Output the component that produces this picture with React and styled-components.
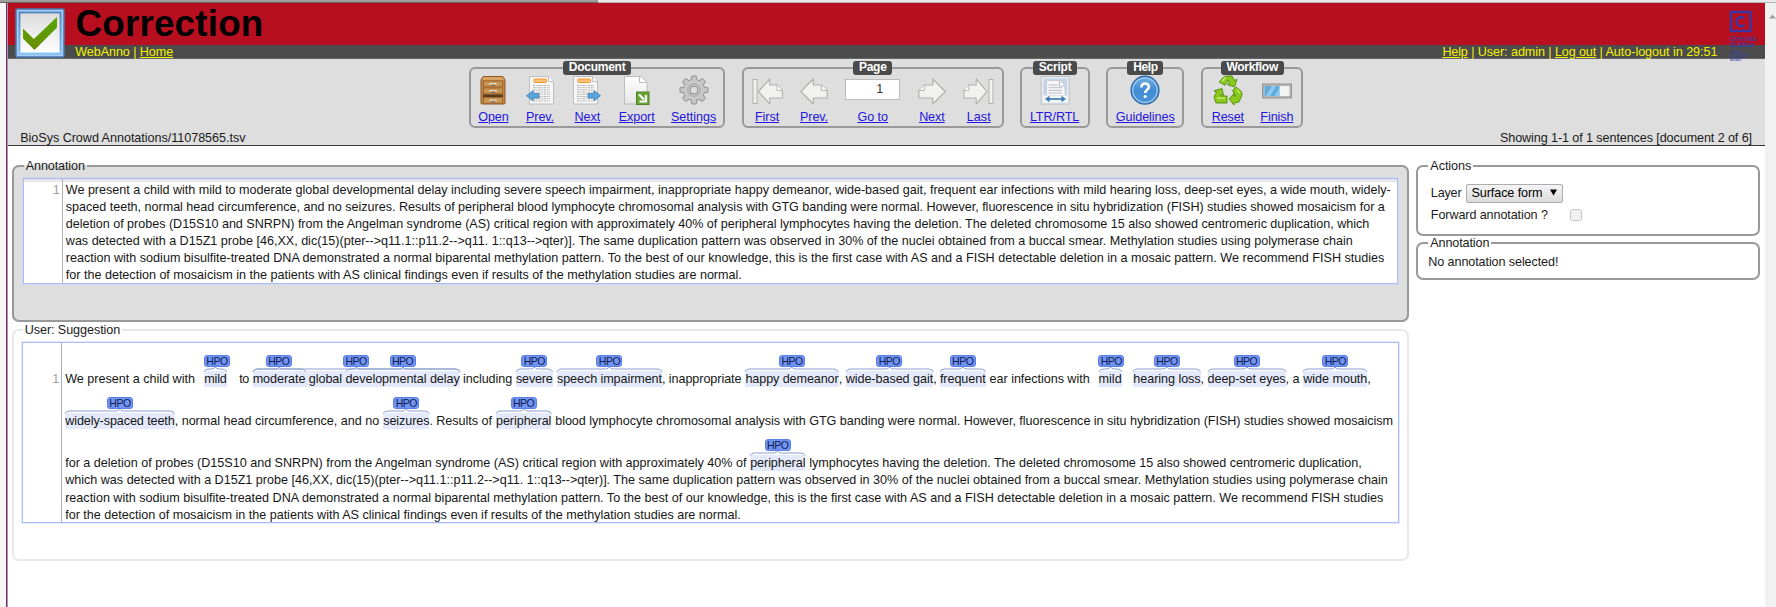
import React, { useLayoutEffect, useRef } from "react";
import styled, { createGlobalStyle } from "styled-components";

const Global = createGlobalStyle`
  * { box-sizing: border-box; }
  body { margin: 0; background: #fff; overflow: hidden; }
  fieldset { min-width: 0; margin: 0; padding: 0; }
`;

const Page = styled.div`
  width: 1776px;
  height: 607px;
  overflow: hidden;
  display: flex;
  flex-direction: column;
  font: 12.6px/14px "Liberation Sans", Arial, sans-serif;
  color: #1a1a1a;
`;
const TopStrip = styled.div`
  height: 3px;
  flex: none;
  display: flex;
  background: #e8e8e8;
  border-bottom: 1px solid #b4b4b4;
`;
const TopShade = styled.div`
  width: 598px;
  height: 3px;
  background: #a09e9c;
  border-bottom: 1px solid #66625f;
`;
const Frame = styled.div`
  flex: 1;
  min-height: 0;
  display: flex;
`;
const LeftEdge = styled.div`
  width: 8px;
  background: #f8f8f8;
  border-right: 1px solid #b98fb4;
  box-shadow: inset -1px 0 0 #5e3359;
`;
const Main = styled.div`
  position: relative;
  width: 1757px;
`;
const ScrollTrack = styled.div`
  flex: 1;
  background: #f1f1f1;
  padding: 5px 0 0 4px;
`;

const Banner = styled.div`
  height: 41.5px;
  background: #b70f20;
  padding: 1.5px 0 0 67.5px;
  color: #000;
  font-size: 36.8px;
  line-height: 37px;
  font-weight: bold;
`;
const NavBar = styled.div`
  height: 14.5px;
  background: #4c4c4c;
  border-bottom: 1px solid #666;
  color: #f2f200;
  display: flex;
  justify-content: space-between;
  padding: 0 47.5px 0 67.3px;
`;
const LogoSlot = styled.div`
  position: absolute;
  left: 7px;
  top: 4px;
  width: 51px;
  height: 54px;
`;
const InstituteSlot = styled.div`
  position: absolute;
  left: 1721px;
  top: 7px;
  width: 30px;
  height: 52px;
  opacity: 0.9;
`;

const Header = styled.div`
  height: 87px;
  background: #dedede;
  border-bottom: 1.5px solid #3c3540;
  display: flex;
  flex-direction: column;
  justify-content: space-between;
`;
const Toolbar = styled.div`
  display: flex;
  gap: 16.6px;
  padding: 2px 0 0 461px;
`;
const Group = styled.fieldset`
  width: ${(p) => p.$w}px;
  height: 67px;
  border: 2px solid #999;
  border-radius: 6px;
  display: block;
`;
const GroupTitle = styled.legend`
  width: ${(p) => p.$w}px;
  height: 14px;
  margin: 0 auto;
  padding: 0;
  background: #4a4a4a;
  border-radius: 3px;
  color: #fff;
  font-weight: bold;
  font-size: 12px;
  line-height: 13.5px;
  text-align: center;
`;
const Items = styled.div`
  display: flex;
  justify-content: space-between;
  padding: 0 ${(p) => p.$r}px 0 ${(p) => p.$l}px;
  height: 50px;
`;
const Item = styled.a`
  width: ${(p) => p.$w}px;
  display: flex;
  flex-direction: column;
  align-items: center;
  color: #2414e0;
  svg { flex: none; margin-bottom: 4.5px; overflow: visible; }
`;
const PageInput = styled.div`
  width: 55px;
  height: 20.5px;
  margin: 4px 0 10px;
  flex: none;
  border: 1px solid #bbb;
  background: #fff;
  color: #333;
  padding-right: 16px;
  text-align: right;
  line-height: 19px;
`;
const Status = styled.div`
  display: flex;
  justify-content: space-between;
  padding: 0 13px 0 12.2px;
`;

const Body = styled.div`
  display: flex;
  align-items: flex-start;
  gap: 7.3px;
  padding: 13px 0 0 4px;
`;
const Column = styled.div`
  width: ${(p) => p.$w}px;
  display: flex;
  flex-direction: column;
`;
const Panel = styled.fieldset`
  height: ${(p) => p.$h}px;
  margin-top: ${(p) => p.$mt || 0}px;
  border: 2px solid ${(p) => (p.$faint ? "#e8e8e8" : "#999")};
  border-radius: 7px;
  background: ${(p) => p.$bg || "transparent"};
  padding: 0 ${(p) => p.$px}px;
`;
const PanelTitle = styled.legend`
  margin-left: ${(p) => p.$ml}px;
  padding: 0 2px;
  height: 14px;
`;
const TextBox = styled.div`
  height: ${(p) => p.$h}px;
  margin: ${(p) => p.$mt}px ${(p) => p.$mr}px 0 0;
  border: 1.5px solid #a9bcf5;
  box-shadow: 0 0 0 0.5px #c9d6fb;
  background: #fff;
  background-image: ${(p) => (p.$shaded ? "linear-gradient(#e6e6ea, #e6e6ea)" : "none")};
  background-size: 100% 3px;
  background-repeat: no-repeat;
  display: flex;
  line-height: 17.18px;
`;
const Gutter = styled.div`
  width: 39px;
  flex: none;
  border-right: 1px solid #b0b0b0;
  color: #a0a0a0;
  text-align: right;
  padding: ${(p) => p.$pt}px 2px 0 0;
`;
const Lines = styled.div`
  padding: ${(p) => p.$pt}px 0 0 3px;
  white-space: pre;
  color: #161616;
`;
const Line = styled.div`
  display: flex;
  padding-top: ${(p) => (p.$annotated ? 24.9 : 0)}px;
  height: ${(p) => (p.$annotated ? 42.08 : 17.18)}px;
`;
const Space = styled.span`
  width: ${(p) => p.$w}px;
  flex: none;
`;
const Fitted = styled.span`
  display: inline-block;
  flex: none;
  width: ${(p) => p.$w}px;
  white-space: pre;
  text-decoration: ${(p) => (p.$underline ? "underline" : "none")};
`;
const Marked = styled.span`
  position: relative;
  flex: none;
  width: ${(p) => p.$w}px;
  background: linear-gradient(#e4eafb, #e4eafb) 0 0 / 100% 16px no-repeat;
`;
const Arc = styled.svg`
  position: absolute;
  top: -4px;
  left: 0;
  overflow: visible;
`;
const Badge = styled.span`
  position: absolute;
  top: -15.7px;
  left: ${(p) => p.$x}px;
  width: 26px;
  height: 11.5px;
  border: 1px solid #5c7fe6;
  border-radius: 3px;
  background: #7094f5;
  color: #101c4c;
  font-size: 10.5px;
  line-height: 10px;
  text-align: center;
`;
const Form = styled.div`
  display: flex;
  flex-direction: column;
  padding: ${(p) => p.$pt}px 0 0 ${(p) => p.$pl}px;
`;
const Field = styled.div`
  display: flex;
  align-items: center;
  height: ${(p) => p.$h}px;
`;
const Select = styled.div`
  width: 97px;
  height: 19px;
  margin-left: 4.5px;
  border: 1px solid #adadad;
  border-radius: 2px;
  background: linear-gradient(#f4f4f4, #dcdcdc);
  display: flex;
  align-items: center;
  justify-content: space-between;
  padding: 0 5px 0 4.5px;
  color: #000;
`;
const Checkbox = styled.div`
  width: 12.5px;
  height: 12.5px;
  margin-left: 22px;
  border: 1px solid #c6c6c6;
  border-radius: 2.5px;
  background: #f0f0f0;
`;

/* Text set to an exact measure by adjusting its tracking. */
function Fit({ w, underline, children }) {
  const ref = useRef(null);
  useLayoutEffect(() => {
    const el = ref.current;
    el.style.letterSpacing = "0px";
    const natural = el.getBoundingClientRect().width;
    el.style.letterSpacing = `${(w - natural) / el.textContent.length}px`;
  }, [w, children]);
  return (
    <Fitted $w={w} $underline={underline}>
      <span ref={ref}>{children}</span>
    </Fitted>
  );
}

function arcPath(x, w, c) {
  return `M${x} 4.6 Q${x + 1} 2 ${x + 5} 2 H${c - 4} Q${c - 1} 2 ${c} 0 Q${c + 1} 2 ${c + 4} 2 H${x + w - 5} Q${x + w - 1} 2 ${x + w} 4.6`;
}

function Mark({ w, text, spans }) {
  const list = spans || [{ x: 0, w }];
  return (
    <Marked $w={w}>
      {list.map((s, i) => (
        <React.Fragment key={i}>
          <Arc width={w} height="6" fill="none" stroke="#8d9fd0" strokeWidth="1">
            <path d={arcPath(s.x, s.w, s.x + s.w / 2)} />
          </Arc>
          <Badge $x={s.badge ?? s.x + s.w / 2 - 13}>
            <Fit w={21.3}>HPO</Fit>
          </Badge>
        </React.Fragment>
      ))}
      <Fit w={w}>{text}</Fit>
    </Marked>
  );
}

/* Each part is [start, end, text, marked, spans], measured along the line. */
function AnnotatedLine({ origin, parts }) {
  let at = origin;
  const out = [];
  parts.forEach(([start, end, text, marked, spans], i) => {
    if (start > at) out.push(<Space key={`s${i}`} $w={start - at} />);
    out.push(
      marked ? (
        <Mark key={i} w={end - start} text={text} spans={spans} />
      ) : (
        <Fit key={i} w={end - start}>{text}</Fit>
      )
    );
    at = end;
  });
  return <Line $annotated>{out}</Line>;
}

const row1 = [
  [65.5, 195.3, "We present a child with"],
  [204.5, 227, "mild", true, [{ x: 0, w: 22.5, badge: -0.2 }]],
  [239.5, 249, "to"],
  [253, 460, "moderate global developmental delay", true, [
    { x: 0, w: 52.5 },
    { x: 0, w: 207 },
    { x: 93, w: 114 },
  ]],
  [463.3, 512.5, "including"],
  [516.3, 553, "severe", true],
  [557.3, 662.3, "speech impairment", true],
  [662.3, 741.8, ", inappropriate"],
  [745.8, 839, "happy demeanor", true],
  [839, 842, ","],
  [846, 933.5, "wide-based gait", true],
  [933.5, 937, ","],
  [940.3, 986, "frequent", true],
  [990, 1090, "ear infections with"],
  [1099, 1122, "mild", true, [{ x: 0, w: 23, badge: -0.2 }]],
  [1133.7, 1201, "hearing loss", true],
  [1201, 1204, ","],
  [1208, 1286, "deep-set eyes", true],
  [1286, 1300, ", a"],
  [1303.7, 1367.7, "wide mouth", true],
  [1367.7, 1371, ","],
];
const row2 = [
  [65.5, 175, "widely-spaced teeth", true],
  [175, 379.5, ", normal head circumference, and no"],
  [383.5, 429.7, "seizures", true],
  [429.7, 492.3, ". Results of"],
  [496.3, 551.7, "peripheral", true],
  [555.5, 1393.3, "blood lymphocyte chromosomal analysis with GTG banding were normal. However, fluorescence in situ hybridization (FISH) studies showed mosaicism"],
];
const row3 = [
  [65.5, 746.7, "for a deletion of probes (D15S10 and SNRPN) from the Angelman syndrome (AS) critical region with approximately 40% of"],
  [750.5, 805.7, "peripheral", true],
  [809.7, 1362, "lymphocytes having the deletion. The deleted chromosome 15 also showed centromeric duplication,"],
];
const tail = [
  [1318.5, "reaction with sodium bisulfite-treated DNA demonstrated a normal biparental methylation pattern. To the best of our knowledge, this is the first case with AS and a FISH detectable deletion in a mosaic pattern. We recommend FISH studies"],
  [676, "for the detection of mosaicism in the patients with AS clinical findings even if results of the methylation studies are normal."],
];
const plain = [
  [1324.8, "We present a child with mild to moderate global developmental delay including severe speech impairment, inappropriate happy demeanor, wide-based gait, frequent ear infections with mild hearing loss, deep-set eyes, a wide mouth, widely-"],
  [1319, "spaced teeth, normal head circumference, and no seizures. Results of peripheral blood lymphocyte chromosomal analysis with GTG banding were normal. However, fluorescence in situ hybridization (FISH) studies showed mosaicism for a"],
  [1303.5, "deletion of probes (D15S10 and SNRPN) from the Angelman syndrome (AS) critical region with approximately 40% of peripheral lymphocytes having the deletion. The deleted chromosome 15 also showed centromeric duplication, which"],
  [1287, "was detected with a D15Z1 probe [46,XX, dic(15)(pter-->q11.1::p11.2-->q11. 1::q13-->qter)]. The same duplication pattern was observed in 30% of the nuclei obtained from a buccal smear. Methylation studies using polymerase chain"],
  ...tail,
];

const Icon = ({ w = 30, children }) => (
  <svg width={w} height="30" viewBox={`0 0 ${w} 30`} fill="none">{children}</svg>
);

const OpenIcon = () => (
  <Icon>
    <path d="M5 1.5H25L27 5V28a1 1 0 0 1-1 1H4a1 1 0 0 1-1-1V5Z" fill="#bd8547" stroke="#8f5a22" />
    <path d="M5.5 2H24.5L26 5H4Z" fill="#d9a566" />
    {[6, 13, 22.5].map((y) => (
      <g key={y}>
        <rect x="5.500" y={y} width="19" height="5.800" fill="#c99350" stroke="#9b632b" strokeWidth=".8" />
        <path d={`M12 ${y + 4} v-1.500 h6 v1.500`} stroke="#e0e0e0" strokeWidth="1.200" />
        <path d={`M12.500 ${y + 4.600} h5`} stroke="#6b6b6b" strokeWidth=".8" />
      </g>
    ))}
    <path d="M5 19.500H25V22H5Z" fill="#5a3a1c" />
  </Icon>
);

const Sheet = ({ x }) => (
  <g>
    <path d={`M${x} 1.500H${x + 19}L${x + 24} 6.500V29H${x}Z`} fill="#f7f7f7" stroke="#bdbdbd" />
    <path d={`M${x + 19} 1.500V6.500H${x + 24}`} fill="#fff" stroke="#bdbdbd" />
    <rect x={x + 4.5} y="4" width="12.500" height="3.500" rx=".8" fill="#fcc376" stroke="#f0962e" />
    {[10.5, 12.7, 14.9, 17.1, 19.3, 21.5, 23.7, 25.9].map((y) => (
      <path key={y} d={`M${x + 3.5} ${y}H${x + 20.5}`} stroke="#b4b4b4" strokeDasharray="2.500 .7 1.500 .7" />
    ))}
  </g>
);
const DocPrevIcon = () => (
  <Icon>
    <Sheet x={4.5} />
    <path d="M1.500 20.700L8 15.500V18.500H14V23H8V26Z" fill="#5aa4dc" stroke="#3d7fb8" strokeWidth=".8" />
  </Icon>
);
const DocNextIcon = () => (
  <Icon>
    <Sheet x={1.5} />
    <path d="M28.500 20.700L22 15.500V18.500H16V23H22V26Z" fill="#5aa4dc" stroke="#3d7fb8" strokeWidth=".8" />
  </Icon>
);
const ExportIcon = () => (
  <Icon>
    <path d="M2.500 1.500H19L25 7V29H2.500Z" fill="url(#exp)" stroke="#bcbcbc" />
    <defs>
      <linearGradient id="exp" x1="0" y1="0" x2="0" y2="1">
        <stop stopColor="#fff" /><stop offset="1" stopColor="#e6e6e6" />
      </linearGradient>
    </defs>
    <path d="M17.500 2V7.500H24.500" fill="#fff" stroke="#bcbcbc" />
    <rect x="14.500" y="17" width="12.500" height="12.500" fill="#6aa336" stroke="#4c8420" />
    <path d="M17 19.500L22 24.500M24 20V26.500H17.500" stroke="#fff" strokeWidth="2.200" />
  </Icon>
);
const GearIcon = () => (
  <Icon>
    {[0, 45, 90, 135, 180, 225, 270, 315].map((a) => (
      <path key={a} d="M11.800 5.500L12.800 1H17.200L18.200 5.500Z" fill="#c4c4c4" stroke="#8c8c8c" strokeWidth=".9" strokeLinejoin="round" transform={`rotate(${a} 15 15)`} />
    ))}
    <circle cx="15" cy="15" r="10.500" stroke="#909090" strokeWidth=".9" strokeDasharray="2.400 5.850" strokeDashoffset="-2.950" />
    <circle cx="15" cy="15" r="10.200" fill="#c9c9c9" />
    <circle cx="15" cy="15" r="6.300" stroke="#b0b0b0" strokeWidth="1.500" />
    <circle cx="15" cy="15" r="4" fill="#dedede" stroke="#8a8a8a" />
  </Icon>
);
const LeftArrow = () => (
  <g>
    <path d="M0 12.500L12.500 0V6H20.500L26.500 11.500V19H12.500V25Z" fill="#f1f1ef" stroke="#b0b0ae" strokeWidth="1.200" strokeLinejoin="round" />
    <path d="M20.500 6V11.500H26.500" fill="#fff" stroke="#b5b5b3" />
  </g>
);
const RightArrow = () => (
  <g>
    <path d="M26.500 12.500L14 0V6H5.500L0 11.500V19H14V25Z" fill="#f1f1ef" stroke="#b0b0ae" strokeWidth="1.200" strokeLinejoin="round" />
    <path d="M5.500 6V11.500H0" fill="#fff" stroke="#b5b5b3" />
  </g>
);
const Bar = ({ x }) => <rect x={x} y="4.500" width="4" height="24" fill="#f1f1ef" stroke="#b0b0ae" />;
const FirstIcon = () => (
  <Icon w={32}><Bar x={2} /><g transform="translate(7.500 4) scale(.9 1)"><LeftArrow /></g></Icon>
);
const PrevIcon = () => (
  <Icon w={28}><g transform="translate(.8 4)"><LeftArrow /></g></Icon>
);
const NextIcon = () => (
  <Icon w={28}><g transform="translate(.8 4)"><RightArrow /></g></Icon>
);
const LastIcon = () => (
  <Icon w={32}><Bar x={26} /><g transform="translate(1 4) scale(.87 1)"><RightArrow /></g></Icon>
);
const ScriptIcon = () => (
  <Icon>
    <rect x="1.200" y="1.500" width="28" height="27.500" fill="#e8edf2" stroke="#b9c0c6" />
    <rect x="3.500" y="3.500" width="23.500" height="17" fill="#c3d5e6" />
    <path d="M6.500 5.500H19.500L25 11V20.500H6.500Z" fill="#f7f7f7" stroke="#c2c6ca" strokeWidth=".7" />
    <path d="M19.500 5.500V11H25" fill="#fff" stroke="#b5b9be" />
    <path d="M8.500 10H18M8.500 12.700H22M8.500 15.400H22M8.500 18H22" stroke="#b8bcc2" />
    <rect x="3.500" y="20.500" width="23.500" height="7" fill="#f4f6f8" />
    <path d="M8 24H23" stroke="#3b7cb3" strokeWidth="1.700" />
    <path d="M5 24L9.500 20.800V27.200ZM26 24L21.500 20.800V27.200Z" fill="#3b7cb3" />
  </Icon>
);
const HelpIcon = () => (
  <Icon>
    <defs>
      <linearGradient id="hlp" x1="0" y1="0" x2="0" y2="1">
        <stop stopColor="#77b2e4" /><stop offset=".5" stopColor="#3f8bd2" /><stop offset="1" stopColor="#4b96da" />
      </linearGradient>
    </defs>
    <circle cx="15" cy="15.200" r="13.900" fill="url(#hlp)" stroke="#2e6cab" strokeWidth="1.400" />
    <circle cx="15" cy="15.200" r="12.200" stroke="#a8cff0" strokeWidth="1.200" />
    <path d="M11.400 12.500C11.400 7.300 19 7.500 18.900 12C18.800 14.800 15.200 14.900 15.200 18" stroke="#fff" strokeWidth="2.500" />
    <circle cx="15.200" cy="21.500" r="1.600" fill="#fff" />
  </Icon>
);
const RecycleIcon = () => (
  <Icon>
    <g fill="#8bc91d" stroke="#4f8a0b" strokeWidth=".9" strokeLinejoin="round">
      <path d="M10 2.500L13 1H19L21.500 5.500L24 4.300L21.500 12L14 9.500L16.500 8.200L14.800 5L12 10.200L6.200 7Z" />
      <path d="M23 12L28.500 16.500L29 20L26 27L21 28V30L16 24L21 18.500V21H22.500L19.500 15.500Z" />
      <path d="M3 28L1 22L3.500 17L1 15.800L9 13.500L10.500 20.500L8.300 19.400L7.500 21H14V28Z" />
    </g>
    <path d="M9 6L12.500 2.500M24 15L27 18M4 23H12" stroke="#c5ec6a" strokeWidth="1.600" />
  </Icon>
);
const FinishIcon = () => (
  <Icon w={32}>
    <rect x="1.500" y="9" width="29" height="14" fill="#b3b3b3" stroke="#949494" />
    <rect x="3.500" y="11" width="25" height="10" fill="#f3f3f3" />
    <rect x="3.500" y="11" width="15" height="10" fill="#5fabe0" />
    <path d="M5 21L11 11H15L9 21ZM13.500 21L18.500 13V19L17.300 21Z" fill="#93caf0" />
  </Icon>
);

const groups = [
  { title: "Document", w: 256.2, tw: 68.3, fw: 56.7, l: 7.3, r: 7.6, items: [
    ["Open", 30.2, OpenIcon], ["Prev.", 28, DocPrevIcon], ["Next", 25.5, DocNextIcon],
    ["Export", 36, ExportIcon], ["Settings", 45.2, GearIcon],
  ], gaps: [0, 17.5, 20.6, 18.6, 16.3] },
  { title: "Page", w: 262, tw: 39.3, fw: 27.5, l: 11.2, r: 11, items: [
    ["First", 24.2, FirstIcon], ["Prev.", 28, PrevIcon], ["Go to", 30.7, null],
    ["Next", 25.5, NextIcon], ["Last", 24, LastIcon],
  ], gaps: [0, 20.8, 29.3, 31, 22] },
  { title: "Script", w: 69.5, tw: 44, fw: 32.8, l: 7.5, r: 8, items: [["LTR/RTL", 49.3, ScriptIcon]], gaps: [0] },
  { title: "Help", w: 78, tw: 36, fw: 24.5, l: 7.4, r: 8, items: [["Guidelines", 58.8, HelpIcon]], gaps: [0] },
  { title: "Workflow", w: 102.3, tw: 62.7, fw: 51.5, l: 8.7, r: 8, items: [
    ["Reset", 32.2, RecycleIcon], ["Finish", 33, FinishIcon],
  ], gaps: [0, 16] },
];

export default function App() {
  return (
    <Page>
      <Global />
      <TopStrip><TopShade /></TopStrip>
      <Frame>
        <LeftEdge />
        <Main>
          <Banner><Fit w={188}>Correction</Fit></Banner>
          <NavBar>
            <span><Fit w={64.5}>{"WebAnno | "}</Fit><Fit w={33.3} underline>Home</Fit></span>
            <span>
              <Fit w={25.3} underline>Help</Fit>
              <Fit w={87.3}>{" | User: admin | "}</Fit>
              <Fit w={41} underline>Log out</Fit>
              <Fit w={121.5}>{" | Auto-logout in 29:51"}</Fit>
            </span>
          </NavBar>
          <LogoSlot>
            <svg width="51" height="54" viewBox="0 0 51 54" fill="none">
              <defs>
                <linearGradient id="lg" x1="0" y1="0" x2="0" y2="1">
                  <stop stopColor="#4e84bd" /><stop offset="1" stopColor="#7fc0f2" />
                </linearGradient>
                <linearGradient id="lf" x1="0" y1="0" x2="0" y2="1">
                  <stop stopColor="#dcdcdc" /><stop offset="1" stopColor="#fff" />
                </linearGradient>
                <linearGradient id="ck" x1="0" y1="0" x2="0" y2="1">
                  <stop stopColor="#55a800" /><stop offset="1" stopColor="#6c8c06" />
                </linearGradient>
              </defs>
              <rect x="1" y="2" width="48" height="48" rx="1" fill="#a4cbf0" stroke="#4578b0" strokeWidth="1.500" />
              <rect x="4.500" y="5.500" width="41" height="41" fill="url(#lf)" stroke="url(#lg)" strokeWidth="1.800" />
              <path d="M0.500 51.500H50" stroke="#777" strokeWidth="1" opacity=".5" />
              <path d="M8 21.500L18.800 32L42 10V20.500L19.500 43L8 31.500Z" fill="url(#ck)" />
            </svg>
          </LogoSlot>
          <InstituteSlot>
            <svg width="30" height="52" viewBox="0 0 30 52" fill="none">
              <rect x="2" y="2" width="19.500" height="19" stroke="#2c3bb0" strokeWidth="2.400" />
              <path d="M15.500 8.500A4.600 4.600 0 1 0 15.500 14.700" stroke="#2c3bb0" strokeWidth="2.400" />
              <g fill="#3340a8" fontFamily="Liberation Sans" fontWeight="bold">
                <text x=".8" y="31" fontSize="6.300" textLength="27">Ciências</text>
                <text x=".8" y="37.300" fontSize="6.300" textLength="24">ULisboa</text>
              </g>
              <path d="M1 41.500H13M1 44.500H20M1 47.500H17M1 50H12" stroke="#3340a8" strokeWidth="1.500" strokeDasharray="3 .5 2 .4" opacity=".75" />
            </svg>
          </InstituteSlot>
          <Header>
            <Toolbar>
              {groups.map((g) => (
                <Group key={g.title} $w={g.w}>
                  <GroupTitle $w={g.tw}><Fit w={g.fw}>{g.title}</Fit></GroupTitle>
                  <Items $l={g.l} $r={g.r}>
                    {g.items.map(([label, w, Ico], i) => (
                      <React.Fragment key={label}>
                        {i > 0 && <Space $w={g.gaps[i]} />}
                        <Item $w={w}>
                          {Ico ? <Ico /> : <PageInput>1</PageInput>}
                          <Fit w={w} underline>{label}</Fit>
                        </Item>
                      </React.Fragment>
                    ))}
                  </Items>
                </Group>
              ))}
            </Toolbar>
            <Status>
              <Fit w={225.3}>BioSys Crowd Annotations/11078565.tsv</Fit>
              <Fit w={252}>Showing 1-1 of 1 sentences [document 2 of 6]</Fit>
            </Status>
          </Header>
          <Body>
            <Column $w={1397}>
              <Panel $h={163} $bg="#dedede" $px={8.8}>
                <PanelTitle $ml={1}><Fit w={59}>Annotation</Fit></PanelTitle>
                <TextBox $h={106} $mt={5} $mr={0.5} $shaded>
                  <Gutter $pt={2.6}>1</Gutter>
                  <Lines $pt={2.6}>
                    {plain.map(([w, t]) => (
                      <Line key={w}><Fit w={w}>{t}</Fit></Line>
                    ))}
                  </Lines>
                </TextBox>
              </Panel>
              <Panel $h={238} $mt={1} $px={8.2} $faint>
                <PanelTitle $ml={0.5}><Fit w={95.5}>User: Suggestion</Fit></PanelTitle>
                <TextBox $h={181} $mt={5} $mr={0}>
                  <Gutter $pt={28}>1</Gutter>
                  <Lines $pt={3.1}>
                    <AnnotatedLine origin={65.5} parts={row1} />
                    <AnnotatedLine origin={65.5} parts={row2} />
                    <AnnotatedLine origin={65.5} parts={row3} />
                    <Line><Fit w={1322.5}>{"which " + plain[3][1]}</Fit></Line>
                    {tail.map(([w, t]) => (
                      <Line key={w}><Fit w={w - 0.5}>{t}</Fit></Line>
                    ))}
                  </Lines>
                </TextBox>
              </Panel>
            </Column>
            <Column $w={343.5}>
              <Panel $h={77.3} $px={12}>
                <PanelTitle $ml={-2}><Fit w={41}>Actions</Fit></PanelTitle>
                <Form $pt={9.2} $pl={0.5}>
                  <Field $h={22}>
                    <Fit w={30.7}>Layer</Fit>
                    <Select>
                      <Fit w={71}>Surface form</Fit>
                      <svg width="7" height="8" viewBox="0 0 7 8"><path d="M0 .5H7L3.500 6.500Z" fill="#000" /></svg>
                    </Select>
                  </Field>
                  <Field $h={22}>
                    <Fit w={117}>Forward annotation ?</Fit>
                    <Checkbox />
                  </Field>
                </Form>
              </Panel>
              <Panel $h={44} $px={10}>
                <PanelTitle $ml={0}><Fit w={59}>Annotation</Fit></PanelTitle>
                <Form $pt={5} $pl={0}><Fit w={130}>No annotation selected!</Fit></Form>
              </Panel>
            </Column>
          </Body>
        </Main>
        <ScrollTrack>
          <svg width="7" height="5" viewBox="0 0 7 5"><path d="M0 4.500L3.500 .5L7 4.500Z" fill="#a0a0a0" /></svg>
        </ScrollTrack>
      </Frame>
    </Page>
  );
}
